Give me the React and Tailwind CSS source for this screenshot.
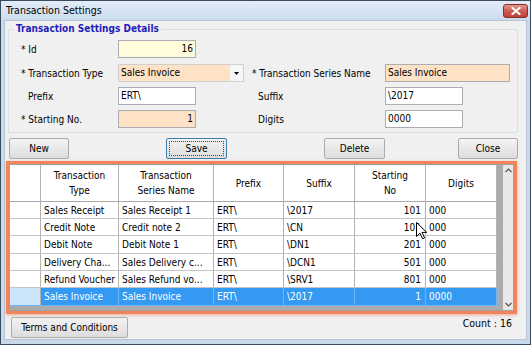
import React from 'react';

const rows = [
    { type: 'Sales Receipt', series: 'Sales Receipt 1', prefix: 'ERT\\', suffix: '\\2017', start: '101', digits: '000', h: 'h-[17px]' },
    { type: 'Credit Note', series: 'Credit note 2', prefix: 'ERT\\', suffix: '\\CN', start: '101', digits: '000', h: 'h-[17px]' },
    { type: 'Debit Note', series: 'Debit Note 1', prefix: 'ERT\\', suffix: '\\DN1', start: '201', digits: '000', h: 'h-[18px]' },
    { type: 'Delivery Cha...', series: 'Sales Delivery c...', prefix: 'ERT\\', suffix: '\\DCN1', start: '501', digits: '000', h: 'h-[17px]' },
    { type: 'Refund Voucher', series: 'Sales Refund vo...', prefix: 'ERT\\', suffix: '\\SRV1', start: '801', digits: '000', h: 'h-[17px]' },
    { type: 'Sales Invoice', series: 'Sales Invoice', prefix: 'ERT\\', suffix: '\\2017', start: '1', digits: '0000', h: 'h-[18px]', selected: true },
];

const Field = ({ className = '', children }) => (
    <div className={`h-[18px] border border-[#abadb3] leading-[16px] px-[2px] text-black ${className}`}>{children}</div>
);

const Btn = ({ className = '', children }) => (
    <div className={`h-[21px] border border-[#acacac] rounded-[2px] bg-linear-to-b from-[#f3f3f3] to-[#dddddd] flex items-center justify-center text-black ${className}`}>
        {children}
    </div>
);

const App = () => {
    return (
        <div className="relative w-[531px] h-[345px] bg-[#c9d9ec] border border-[#3b4b5c] flex flex-col font-['DejaVu_Sans_Condensed','DejaVu_Sans',sans-serif] text-[10px] text-black overflow-hidden">
            {/* title bar */}
            <div className="h-[19px] shrink-0 flex items-center bg-linear-to-b from-[#e2ecf7] to-[#ccdcef]">
                <span className="pl-[5px] text-[10.5px]">Transaction Settings</span>
                <div className="ml-auto mr-[2px] w-[25px] h-[14px] rounded-[3px] border border-[#8a2b24] bg-linear-to-b from-[#e29a90] via-[#cc5a4e] to-[#c0443a] flex items-center justify-center">
                    <svg width="10" height="8" viewBox="0 0 10 8">
                        <path d="M1.5 1 L8.5 7 M8.5 1 L1.5 7" stroke="#fff" strokeWidth="2" strokeLinecap="square" />
                    </svg>
                </div>
            </div>

            {/* client area */}
            <div className="flex-1 mx-[3px] mb-[4px] bg-[#f0f0f0] border border-[#b7c5d5] flex flex-col overflow-hidden">
                {/* group box */}
                <div className="relative ml-[3px] mt-[8px] w-[510px] h-[104px] shrink-0 border border-[#d5dfe5] rounded-[2px] pt-[10px] pl-[12px]">
                    <span className="absolute -top-[7px] left-[5px] px-[2px] bg-[#f0f0f0] font-bold text-[#1e1eb8] leading-[12px]">Transaction Settings Details</span>

                    <div className="flex items-center">
                        <div className="w-[97px]">* Id</div>
                        <Field className="w-[78px] bg-[#fffcdb] text-right">16</Field>
                    </div>

                    <div className="flex items-center mt-[6px]">
                        <div className="w-[97px]">* Transaction Type</div>
                        <div className="w-[126px] h-[18px] border border-[#d0d0d0] flex">
                            <div className="flex-1 bg-[#fde2c6] leading-[16px] px-[2px]">Sales Invoice</div>
                            <div className="w-[13px] bg-[#f6f6f6] flex items-center justify-center">
                                <svg width="5" height="3" viewBox="0 0 5 3"><path d="M0 0 H5 L2.5 3 Z" fill="#000" /></svg>
                            </div>
                        </div>
                        <div className="ml-[8px] w-[133px]">* Transaction Series Name</div>
                        <Field className="w-[125px] bg-[#fde2c6]">Sales Invoice</Field>
                    </div>

                    <div className="flex items-center mt-[5px]">
                        <div className="w-[97px] pl-[7px]">Prefix</div>
                        <Field className="w-[78px] bg-white">ERT\</Field>
                        <div className="ml-[56px] w-[133px] pl-[6px]">Suffix</div>
                        <Field className="w-[78px] bg-white">\2017</Field>
                    </div>

                    <div className="flex items-center mt-[5px]">
                        <div className="w-[97px]">* Starting No.</div>
                        <Field className="w-[78px] bg-[#fde2c6] text-right">1</Field>
                        <div className="ml-[56px] w-[133px] pl-[6px]">Digits</div>
                        <Field className="w-[78px] bg-white">0000</Field>
                    </div>
                </div>

                {/* buttons */}
                <div className="flex mt-[5px] shrink-0">
                    <Btn className="ml-[4px] w-[60px]">New</Btn>
                    <div className="ml-[97px] w-[61px] h-[21px] border border-[#3c7fb1] rounded-[2px] bg-linear-to-b from-[#f3f3f3] to-[#dddddd] p-[2px]">
                        <div className="w-full h-full border border-dotted border-[#444] flex items-center justify-center">Save</div>
                    </div>
                    <Btn className="ml-[97px] w-[61px]">Delete</Btn>
                    <Btn className="ml-[73px] w-[60px]">Close</Btn>
                </div>

                {/* grid with highlight */}
                <div className="ml-[1px] mt-[2px] w-[511px] h-[153px] shrink-0 border-[3px] border-[#f2845a] shadow-[0_1px_3px_rgba(240,120,80,0.6)]">
                    <div className="h-full border border-[#a0a0a0] flex">
                        <div className="flex-1 bg-[#ababab] flex flex-col">
                            <div className="flex w-[487px] h-[37px] bg-white text-center leading-[15px] border-b border-[#a9a9a9]">
                                <div className="w-[31px] border-r border-[#b4b4b4]"></div>
                                <div className="w-[78px] border-r border-[#b4b4b4] flex items-center justify-center">Transaction<br />Type</div>
                                <div className="w-[95px] border-r border-[#b4b4b4] flex items-center justify-center">Transaction<br />Series Name</div>
                                <div className="w-[70px] border-r border-[#b4b4b4] flex items-center justify-center">Prefix</div>
                                <div className="w-[71px] border-r border-[#b4b4b4] flex items-center justify-center">Suffix</div>
                                <div className="w-[71px] border-r border-[#b4b4b4] flex items-center justify-center">Starting<br />No</div>
                                <div className="w-[71px] border-r border-[#b4b4b4] flex items-center justify-center">Digits</div>
                            </div>
                            {rows.map((r, i) => (
                                <div key={i} className={`flex w-[487px] ${r.h} border-b ${r.selected ? 'bg-[#3399f3] text-white border-[#6fb6f5]' : 'bg-white border-[#c4c4c4]'}`}>
                                    <div className={`w-[31px] border-r border-[#b4b4b4] ${r.selected ? 'bg-[#cde5f8]' : 'bg-white'}`}></div>
                                    <div className={`w-[78px] border-r pl-[3px] flex items-center whitespace-nowrap ${r.selected ? 'border-[#6fb6f5]' : 'border-[#b4b4b4]'}`}>{r.type}</div>
                                    <div className={`w-[95px] border-r pl-[3px] flex items-center whitespace-nowrap ${r.selected ? 'border-[#6fb6f5]' : 'border-[#b4b4b4]'}`}>{r.series}</div>
                                    <div className={`w-[70px] border-r pl-[3px] flex items-center ${r.selected ? 'border-[#6fb6f5]' : 'border-[#b4b4b4]'}`}>{r.prefix}</div>
                                    <div className={`w-[71px] border-r pl-[3px] flex items-center ${r.selected ? 'border-[#6fb6f5]' : 'border-[#b4b4b4]'}`}>{r.suffix}</div>
                                    <div className={`w-[71px] border-r pr-[4px] flex items-center justify-end ${r.selected ? 'border-[#6fb6f5]' : 'border-[#b4b4b4]'}`}>{r.start}</div>
                                    <div className={`w-[71px] border-r pl-[3px] flex items-center ${r.selected ? 'border-[#6fb6f5]' : 'border-[#b4b4b4]'}`}>{r.digits}</div>
                                </div>
                            ))}
                        </div>
                        {/* scrollbar */}
                        <div className="w-[10px] bg-[#e8e8e8] flex flex-col items-center justify-between py-[3px]">
                            <svg width="7" height="5" viewBox="0 0 7 5"><path d="M0.5 4 L3.5 1 L6.5 4" stroke="#555" strokeWidth="1.2" fill="none" /></svg>
                            <svg width="7" height="5" viewBox="0 0 7 5"><path d="M0.5 1 L3.5 4 L6.5 1" stroke="#555" strokeWidth="1.2" fill="none" /></svg>
                        </div>
                    </div>
                </div>

                {/* bottom */}
                <div className="flex items-start mt-[3px] shrink-0">
                    <Btn className="ml-[6px] w-[117px]">Terms and Conditions</Btn>
                    <span className="ml-auto mr-[14px] -mt-[1px] text-[10.5px]">Count : 16</span>
                </div>
            </div>

            {/* mouse pointer */}
            <svg className="absolute left-[415px] top-[221px]" width="12" height="18" viewBox="0 0 12 18">
                <path d="M0.5 0.5 L0.5 14.5 L4 11.2 L6.6 16.8 L8.6 15.9 L6 10.4 L10.8 10.4 Z" fill="#fff" stroke="#000" strokeWidth="1" strokeLinejoin="miter" />
            </svg>
        </div>
    );
};

export default App;
